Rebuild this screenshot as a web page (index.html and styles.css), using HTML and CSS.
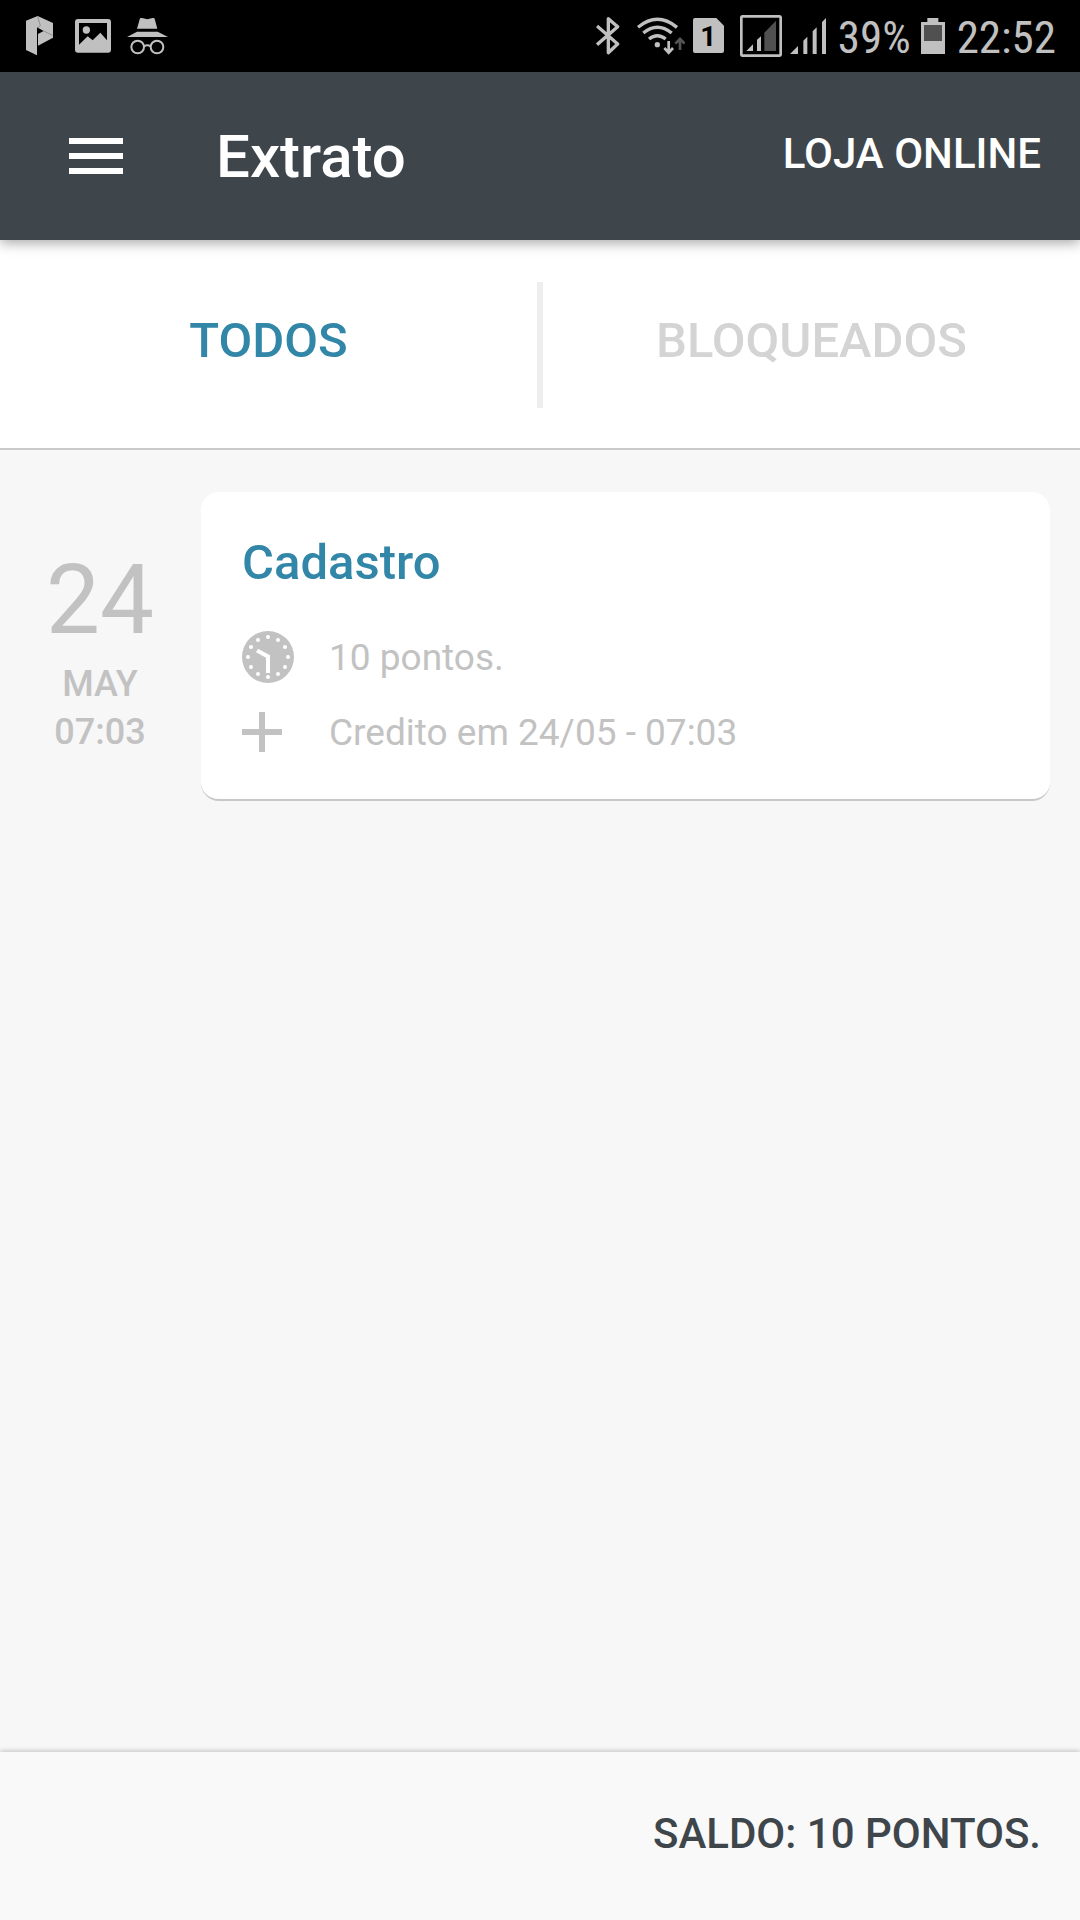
FILE: index.html
```html
<!DOCTYPE html>
<html lang="pt-BR">
<head>
<meta charset="utf-8">
<meta name="viewport" content="width=device-width, initial-scale=1">
<title>Extrato</title>
<link rel="stylesheet" href="styles.css">
</head>
<body>
<div class="status">
  <div class="status-side status-left">
    <svg width="28" height="72" viewBox="78 0 84 216" aria-hidden="true">
      <path fill="#c0c0c0" d="M78 62L113 48L159 69V113L114 137V102L131 93L111 82V166L78 150Z"/>
      <path fill="none" stroke="#777" stroke-width="2" d="M113 50L121 77L113 83M131 93L158 106"/>
    </svg>
    <svg class="picture" width="36" height="72" viewBox="225 0 108 216" aria-hidden="true">
      <rect x="225" y="57" width="108" height="101" rx="9" fill="#c0c0c0"/>
      <path fill="#000" d="M237 69H321V121L301 98L278 121L263 109L237 134Z"/>
      <circle cx="259" cy="90" r="11" fill="#c0c0c0"/>
    </svg>
    <svg width="41" height="72" viewBox="380 0 123 216" aria-hidden="true">
      <path fill="#c0c0c0" d="M419 55Q421 53 425 54L441 58L457 54Q462 53 463 56L471 86H410ZM380 111L410 95H472L503 111Z"/>
      <g fill="none" stroke="#c0c0c0" stroke-width="6"><circle cx="412" cy="141" r="19"/><circle cx="470" cy="141" r="19"/><path d="M431 139Q441 132 451 139"/></g>
    </svg>
  </div>
  <div class="status-side status-right">
    <svg class="bluetooth" width="25" height="72" viewBox="50 0 75 216" aria-hidden="true">
      <path fill="none" stroke="#c0c0c0" stroke-width="10" stroke-linejoin="round" d="M53 78L115 132L87 158V56L115 80L53 134"/>
    </svg>
    <svg class="wifi" width="48" height="72" viewBox="177 0 144 216" aria-hidden="true">
      <g fill="none" stroke="#c0c0c0" stroke-width="10"><path d="M180 82Q238 34 297 82M196 99Q238 64 281 99M213 117Q238 97 263 117"/></g>
      <circle cx="238" cy="134" r="8" fill="#c0c0c0"/>
      <path fill="none" stroke="#c0c0c0" stroke-width="8" d="M272 123V156M259 144L272 158L285 144"/>
      <path fill="none" stroke="#555" stroke-width="8" d="M306 150V119M292 131L306 117L320 131"/>
    </svg>
    <span class="sim">
      <svg width="31" height="72" viewBox="341 0 93 216" aria-hidden="true"><path fill="#c0c0c0" d="M347 54H411L434 77V153Q434 159 428 159H347Q341 159 341 153V60Q341 54 347 54Z"/></svg>
      <span class="sim-number">1</span>
    </span>
    <svg class="signal-box" width="42" height="72" viewBox="483 0 126 216" aria-hidden="true">
      <rect x="487" y="49" width="118" height="118" rx="4" fill="none" stroke="#c0c0c0" stroke-width="8"/>
      <path fill="#c0c0c0" d="M502 153L522 133V153ZM534 119L546 109V153H534Z"/>
      <path fill="#505050" d="M556 98L591 62V153H556Z"/>
    </svg>
    <svg class="signal" width="36" height="72" viewBox="630 0 108 216" aria-hidden="true">
      <path fill="#c0c0c0" d="M630 162L654 138V162ZM670 122L682 110V162H670ZM698 94L710 82V162H698ZM726 66L738 54V162H726Z"/>
    </svg>
    <span class="status-text battery-level">39%</span>
    <svg class="battery" width="24" height="72" viewBox="303 0 72 216" aria-hidden="true">
      <path fill="#c0c0c0" d="M303 66H322V54H355V66H375V162H303Z"/>
      <path fill="#505050" d="M312 75H366V123H312Z"/>
    </svg>
    <span class="status-text">22:52</span>
  </div>
</div>

<header class="header">
  <button class="menu" type="button" aria-label="Menu">
    <svg width="54" height="36" viewBox="0 0 54 36" aria-hidden="true"><path fill="#fff" d="M0 0H54V6H0ZM0 15H54V21H0ZM0 30H54V36H0Z"/></svg>
  </button>
  <h1 class="title">Extrato</h1>
  <a class="store" href="#">LOJA ONLINE</a>
</header>

<nav class="tabs">
  <button class="tab tab-active" type="button">TODOS</button>
  <span class="tab-divider"></span>
  <button class="tab" type="button">BLOQUEADOS</button>
</nav>

<main class="list">
  <article class="entry">
    <div class="date">
      <span class="day">24</span>
      <span class="date-line">MAY</span>
      <span class="date-line">07:03</span>
    </div>
    <div class="card">
      <h2 class="card-title">Cadastro</h2>
      <div class="row">
        <span class="row-icon">
          <svg width="52" height="52" viewBox="0 0 52 52" aria-hidden="true">
            <circle cx="26" cy="26" r="26" fill="#c2c2c2"/>
            <g fill="#fff"><circle cx="26" cy="6" r="2"/><circle cx="36" cy="9" r="2"/><circle cx="43" cy="16" r="2"/><circle cx="46" cy="26" r="2"/><circle cx="43" cy="36" r="2"/><circle cx="36" cy="43" r="2"/><circle cx="26" cy="46" r="2"/><circle cx="16" cy="43" r="2"/><circle cx="9" cy="36" r="2"/><circle cx="6" cy="26" r="2"/><circle cx="9" cy="16" r="2"/><circle cx="16" cy="9" r="2"/></g>
            <path fill="none" stroke="#fff" stroke-width="4" d="M15 19.500L26 25.500V42"/>
          </svg>
        </span>
        <span>10 pontos.</span>
      </div>
      <div class="row">
        <span class="row-icon">
          <svg width="40" height="40" viewBox="0 0 40 40" aria-hidden="true"><path fill="#c2c2c2" d="M17 0H23V17H40V23H23V40H17V23H0V17H17Z"/></svg>
        </span>
        <span>Credito em 24/05 - 07:03</span>
      </div>
    </div>
  </article>
</main>

<footer class="balance">SALDO: 10 PONTOS.</footer>
</body>
</html>
```
FILE: styles.css
```css
* {
  box-sizing: border-box;
}

body {
  margin: 0;
  min-height: 100vh;
  display: flex;
  flex-direction: column;
  background: #f7f7f7;
  color: #c2c2c2;
  font-family: Roboto, "Liberation Sans", sans-serif;
  font-size: 36px;
}

button {
  border: 0;
  padding: 0;
  background: none;
  color: inherit;
  font: inherit;
  cursor: pointer;
}

svg {
  display: block;
}

.status {
  display: flex;
  justify-content: space-between;
  height: 72px;
  padding: 0 24px 0 26px;
  background: #000;
  color: #c0c0c0;
}

.status-side {
  display: flex;
  align-items: center;
}

.status-left {
  gap: 16px;
}

.picture {
  margin-left: 5px;
}

.status-right {
  gap: 12px;
}

.bluetooth {
  margin-right: 4px;
}

.wifi {
  margin-right: -4px;
}

.sim {
  position: relative;
}

.sim-number {
  position: absolute;
  inset: 0;
  color: #000;
  font-size: 28px;
  font-weight: 700;
  line-height: 74px;
  text-align: center;
}

.signal-box {
  margin-left: 4px;
  margin-right: -4px;
}

.battery {
  margin-left: -2px;
}

.status-text {
  padding-top: 4px;
  font-family: "Roboto Condensed", Roboto, sans-serif;
  font-size: 45px;
  line-height: 68px;
}

.header {
  position: relative;
  display: flex;
  align-items: center;
  height: 168px;
  padding: 0 39px 0 69px;
  background: #3e454b;
  color: #fff;
  box-shadow: 0 3px 12px rgba(0, 0, 0, 0.35);
}

.title {
  flex: 1;
  margin: 0 0 0 93px;
  font-size: 60px;
  font-weight: 500;
}

.store {
  padding-bottom: 6px;
  color: inherit;
  font-size: 42px;
  font-weight: 500;
  text-decoration: none;
}

.tabs {
  display: flex;
  padding: 42px 0 40px;
  background: #fff;
  border-bottom: 2px solid #c8cacb;
}

.tab {
  flex: 1;
  height: 126px;
  padding-bottom: 10px;
  color: #d4d4d4;
  font-size: 49px;
  font-weight: 500;
}

.tab-active {
  color: #3287a8;
}

.tab-divider {
  width: 6px;
  background: #eee;
}

.list {
  flex: 1;
  padding: 42px 30px 42px 0;
}

.entry {
  display: flex;
}

.date {
  display: flex;
  flex-direction: column;
  align-items: center;
  width: 200px;
  margin-right: 1px;
  padding-top: 52px;
}

.day {
  margin-bottom: 4px;
  font-size: 96px;
  line-height: 112px;
}

.date-line {
  font-weight: 500;
  line-height: 48px;
}

.card {
  flex: 1;
  padding: 41px 41px 18px;
  background: #fff;
  border-bottom: 2px solid #c8c8c8;
  border-radius: 18px;
}

.card-title {
  margin: 0 0 38px;
  color: #3287a8;
  font-size: 49px;
  font-weight: 500;
  line-height: 60px;
}

.row {
  display: flex;
  align-items: center;
  gap: 35px;
  height: 52px;
  margin-bottom: 23px;
  font-size: 37px;
}

.row-icon {
  width: 52px;
}

.balance {
  height: 168px;
  padding: 0 39px 4px;
  background: #f9f9f9;
  color: #3e454b;
  font-size: 42px;
  font-weight: 500;
  line-height: 164px;
  text-align: right;
  box-shadow: 0 -1px 5px rgba(0, 0, 0, 0.22);
}
```
